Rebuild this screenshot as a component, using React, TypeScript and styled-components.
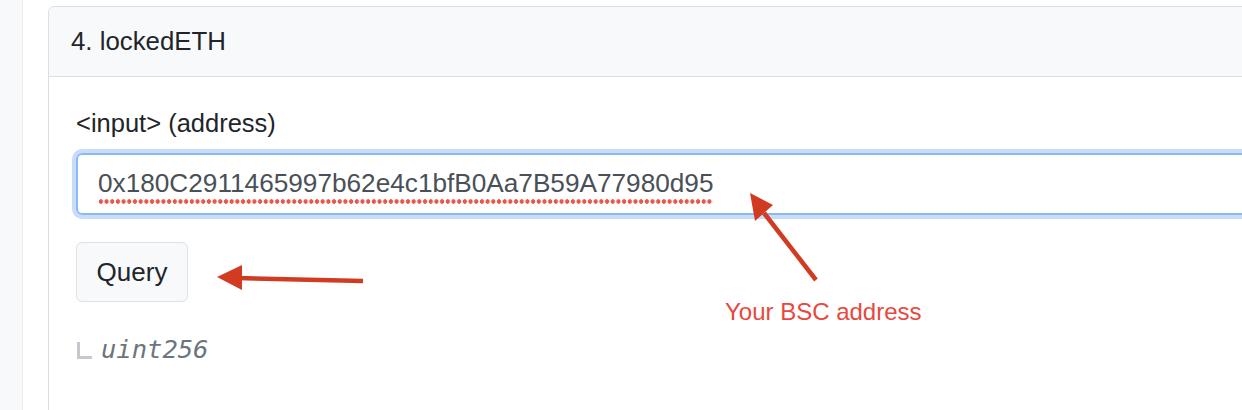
import React from "react"
import styled, { createGlobalStyle } from "styled-components"

const GlobalStyle = createGlobalStyle`
  html, body {
    margin: 0;
    padding: 0;
    background: #ffffff;
  }
  body {
    font-family: "Liberation Sans", Arial, sans-serif;
    color: #212529;
    overflow: hidden;
  }
`

const Page = styled.div`
  position: relative;
  display: flex;
  width: 1242px;
  height: 410px;
  overflow: hidden;
`

const SideStrip = styled.div`
  flex: 0 0 22px;
  background: #f8f9fa;
  border-right: 1px solid #eaecef;
`

const Main = styled.div`
  flex: 1;
  padding: 6px 0 0 25px;
`

const Card = styled.section`
  margin-right: -40px;
  min-height: 500px;
  border: 1.5px solid #dcdfe2;
  border-radius: 6px;
  background: #ffffff;
`

const CardHeader = styled.header`
  height: 69px;
  display: flex;
  align-items: center;
  padding: 0 22px;
  background: #f8f9fa;
  border-bottom: 1.5px solid #dcdfe2;
  border-radius: 6px 6px 0 0;
  font-size: 25.8px;
  color: #212529;
`

const CardBody = styled.div`
  padding: 27px 27px 0;
`

const FieldLabel = styled.label`
  display: block;
  font-size: 25.5px;
  line-height: 1.5;
  color: #212529;
  margin-bottom: 11px;
`

const AddressField = styled.div`
  height: 62px;
  box-sizing: border-box;
  display: flex;
  align-items: center;
  padding: 0 20px;
  border: 2px solid #8cb9f5;
  border-radius: 6px;
  box-shadow: 0 0 0 4px #c9dcfb;
  font-size: 26.2px;
  line-height: 1.5;
  color: #495057;
`

// spellchecker squiggle: a row of round red dots under the value
const MisspelledValue = styled.span`
  padding-bottom: 1px;
  background-image: radial-gradient(circle, #e8584b 2px, transparent 2.5px);
  background-size: 5.7px 5px;
  background-repeat: repeat-x;
  background-position: 0 100%;
`

const QueryButton = styled.button`
  margin-top: 27px;
  width: 112px;
  height: 60px;
  box-sizing: border-box;
  padding: 0;
  background: #f8f9fa;
  border: 1.5px solid #dee2e6;
  border-radius: 6px;
  font-family: "Liberation Sans", Arial, sans-serif;
  font-size: 26px;
  color: #212529;
`

const ResultRow = styled.div`
  margin-top: 28px;
  display: flex;
  align-items: center;
  gap: 9px;
  height: 38px;
`

const TreeCorner = styled.span`
  width: 12px;
  height: 14px;
  margin-left: 1px;
  margin-top: 2px;
  border-left: 3px solid #c4c9d1;
  border-bottom: 3px solid #c4c9d1;
`

const TypeName = styled.span`
  font-family: "DejaVu Sans Mono", "Liberation Mono", monospace;
  font-style: italic;
  font-size: 25.5px;
  color: #6c757d;
`

const Overlay = styled.svg`
  position: absolute;
  inset: 0;
  pointer-events: none;
`

const Note = styled.span`
  position: absolute;
  left: 725px;
  top: 297px;
  font-size: 24px;
  line-height: 30px;
  color: #e8483d;
  white-space: nowrap;
`

const arrowRed = "#d13b22"

export default function App() {
  return (
    <>
      <GlobalStyle />
      <Page>
        <SideStrip />
        <Main>
          <Card>
            <CardHeader>4. lockedETH</CardHeader>
            <CardBody>
              <FieldLabel>&lt;input&gt; (address)</FieldLabel>
              <AddressField>
                <MisspelledValue>0x180C2911465997b62e4c1bfB0Aa7B59A77980d95</MisspelledValue>
              </AddressField>
              <QueryButton type="button">Query</QueryButton>
              <ResultRow>
                <TreeCorner />
                <TypeName>uint256</TypeName>
              </ResultRow>
            </CardBody>
          </Card>
        </Main>

        <Overlay width="1242" height="410" viewBox="0 0 1242 410">
          <line x1="363" y1="281" x2="236" y2="278" stroke={arrowRed} strokeWidth="4.5" />
          <polygon points="217,277 242,265 242,290" fill={arrowRed} />
          <line x1="816" y1="280" x2="764" y2="213" stroke={arrowRed} strokeWidth="4.5" />
          <polygon points="750,193 773,205 755,221" fill={arrowRed} />
        </Overlay>
        <Note>Your BSC address</Note>
      </Page>
    </>
  )
}
